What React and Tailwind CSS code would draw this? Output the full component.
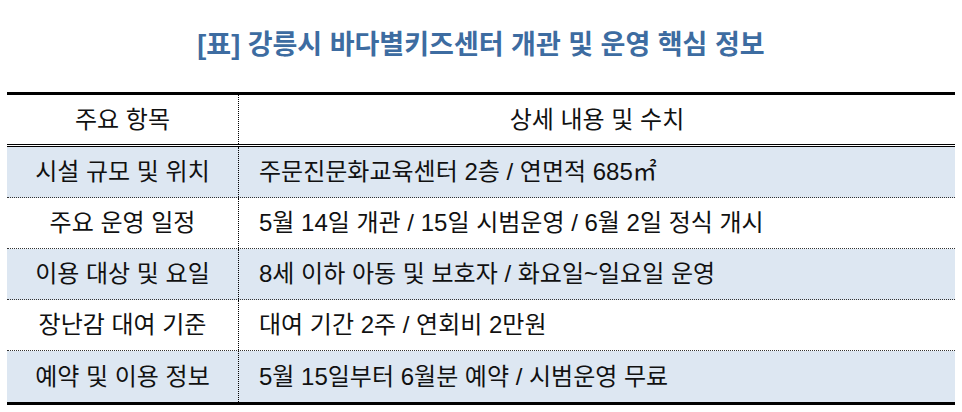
import React from "react";

const rows = [
  ["시설 규모 및 위치", "주문진문화교육센터 2층 / 연면적 685㎡", true],
  ["주요 운영 일정", "5월 14일 개관 / 15일 시범운영 / 6월 2일 정식 개시", false],
  ["이용 대상 및 요일", "8세 이하 아동 및 보호자 / 화요일~일요일 운영", true],
  ["장난감 대여 기준", "대여 기간 2주 / 연회비 2만원", false],
  ["예약 및 이용 정보", "5월 15일부터 6월분 예약 / 시범운영 무료", true],
];

export default function App() {
  return (
    <div
      className="w-[962px] h-[412px] bg-white text-[#111] overflow-hidden"
      style={{ fontFamily: '"Liberation Sans", "Noto Sans CJK KR", sans-serif' }}
    >
      <div className="h-[92px] flex items-center justify-center pb-[2px]">
        <h1 className="text-[27px] font-bold text-[#3d6ca1]">
          [표] 강릉시 바다별키즈센터 개관 및 운영 핵심 정보
        </h1>
      </div>
      <div className="mx-[7px] border-t-[3px] border-b-[3px] border-black">
        <div className="grid grid-cols-[232px_1fr] h-[52px] border-b-[3px] border-double border-black text-[24px]">
          <div className="flex items-center justify-center border-r border-dotted border-black">주요 항목</div>
          <div className="flex items-center justify-center">상세 내용 및 수치</div>
        </div>
        {rows.map(([k, v, shade], i) => (
          <div
            key={i}
            className={`grid grid-cols-[232px_1fr] text-[24px] ${
              i < rows.length - 1 ? "h-[51px] border-b border-dotted border-[#333]" : "h-[51px]"
            } ${shade ? "bg-[#dde7f2]" : "bg-white"}`}
          >
            <div className="flex items-center justify-center border-r border-dotted border-black">{k}</div>
            <div className="flex items-center pl-[20px]">{v}</div>
          </div>
        ))}
      </div>
    </div>
  );
}
